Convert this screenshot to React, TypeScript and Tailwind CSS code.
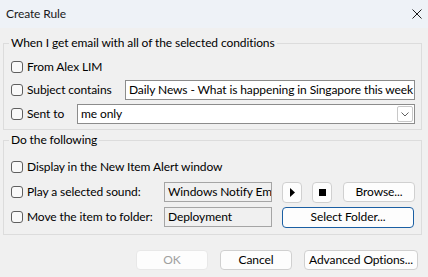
import { ReactNode } from 'react'

const Checkbox = () => (
    <span className="w-[12px] h-[12px] shrink-0 rounded-[3px] border border-[#5f5f5f] bg-[#f9f9f9]" />
)

const Field = ({ children, width, disabled }: { children: ReactNode; width: string; disabled?: boolean }) => (
    <div
        className={`${width} h-[20px] shrink-0 flex items-center pl-[3px] overflow-hidden whitespace-nowrap border ${
            disabled ? 'bg-[#f0f0f0] border-[#a5a5a5]' : 'bg-white border-[#8c8c8c]'
        }`}
    >
        {children}
    </div>
)

const Button = ({ children, className = '' }: { children: ReactNode; className?: string }) => (
    <div
        className={`flex items-center justify-center whitespace-nowrap rounded-[4px] border bg-[#fdfdfd] ${className}`}
    >
        {children}
    </div>
)

export default function App() {
    return (
        <div className="w-[428px] h-[277px] bg-[#f0f0f0] text-[12px] leading-[16px] tracking-[-0.1px] text-black font-['Segoe_UI','Lato',sans-serif] overflow-hidden">
            {/* title bar */}
            <div className="h-[28px] bg-[#eef2f7] flex items-center justify-between pl-[6px] pr-[6px]">
                <span className="text-[#1a1a1a]">Create Rule</span>
                <svg width="10" height="10" viewBox="0 0 10 10">
                    <path d="M0.5 0.5 L9.5 9.5 M9.5 0.5 L0.5 9.5" stroke="#1a1a1a" strokeWidth="1" />
                </svg>
            </div>

            <div className="ml-[3px] mr-[6px]">
                <fieldset className="mt-[7px] border border-[#dcdcdc] pl-[5px] pr-[6px] pt-[6px] pb-[5px]">
                    <legend className="px-[2px]">When I get email with all of the selected conditions</legend>
                    <div className="flex flex-col gap-[3px] pl-[2px]">
                        <div className="h-[20px] flex items-center">
                            <Checkbox />
                            <span className="ml-[4px]">From Alex LIM</span>
                        </div>
                        <div className="h-[20px] flex items-center">
                            <Checkbox />
                            <span className="ml-[4px] w-[98px]">Subject contains</span>
                            <Field width="w-[290px]">Daily News - What is happening in Singapore this week</Field>
                        </div>
                        <div className="h-[20px] mt-[1px] flex items-center">
                            <Checkbox />
                            <span className="ml-[4px] w-[50px]">Sent to</span>
                            <div className="w-[338px] h-[20px] flex items-center justify-between pl-[3px] pr-[1px] bg-white border border-[#8c8c8c]">
                                <span>me only</span>
                                <div className="w-[16px] h-[16px] flex items-center justify-center rounded-[2px] border border-[#c8c8c8]">
                                    <svg width="8" height="5" viewBox="0 0 8 5">
                                        <path d="M0.5 0.5 L4 4 L7.5 0.5" fill="none" stroke="#606060" strokeWidth="1" />
                                    </svg>
                                </div>
                            </div>
                        </div>
                    </div>
                </fieldset>

                <fieldset className="mt-[2px] border border-[#dcdcdc] pl-[5px] pr-[6px] pt-[9px] pb-[7px]">
                    <legend className="px-[2px]">Do the following</legend>
                    <div className="flex flex-col gap-[5px] pl-[2px]">
                        <div className="h-[20px] flex items-center">
                            <Checkbox />
                            <span className="ml-[4px]">Display in the New Item Alert window</span>
                        </div>
                        <div className="h-[20px] flex items-center">
                            <Checkbox />
                            <span className="ml-[4px] w-[137px]">Play a selected sound:</span>
                            <Field width="w-[108px]" disabled>
                                Windows Notify Em
                            </Field>
                            <Button className="ml-[10px] w-[20px] h-[21px] border-[#d0d0d0]">
                                <svg width="5" height="9" viewBox="0 0 5 9">
                                    <path d="M0 0 L5 4.5 L0 9 Z" fill="#000" />
                                </svg>
                            </Button>
                            <Button className="ml-[10px] w-[20px] h-[21px] border-[#d0d0d0]">
                                <span className="w-[7px] h-[7px] bg-black" />
                            </Button>
                            <Button className="ml-[11px] w-[72px] h-[20px] border-[#d0d0d0]">Browse...</Button>
                        </div>
                        <div className="h-[20px] flex items-center">
                            <Checkbox />
                            <span className="ml-[4px] w-[137px]">Move the item to folder:</span>
                            <Field width="w-[108px]" disabled>
                                Deployment
                            </Field>
                            <Button className="ml-[10px] w-[132px] h-[21px] border-[#1b5fa3]">Select Folder...</Button>
                        </div>
                    </div>
                </fieldset>
            </div>

            <div className="mt-[15px] flex justify-end gap-[12px] pr-[10px]">
                <Button className="w-[72px] h-[20px] bg-[#f5f5f5] border-[#e8e8e8] text-[#a0a0a0]">OK</Button>
                <Button className="w-[72px] h-[20px] border-[#d0d0d0]">Cancel</Button>
                <Button className="w-[114px] h-[20px] border-[#d0d0d0]">Advanced Options...</Button>
            </div>
        </div>
    )
}
